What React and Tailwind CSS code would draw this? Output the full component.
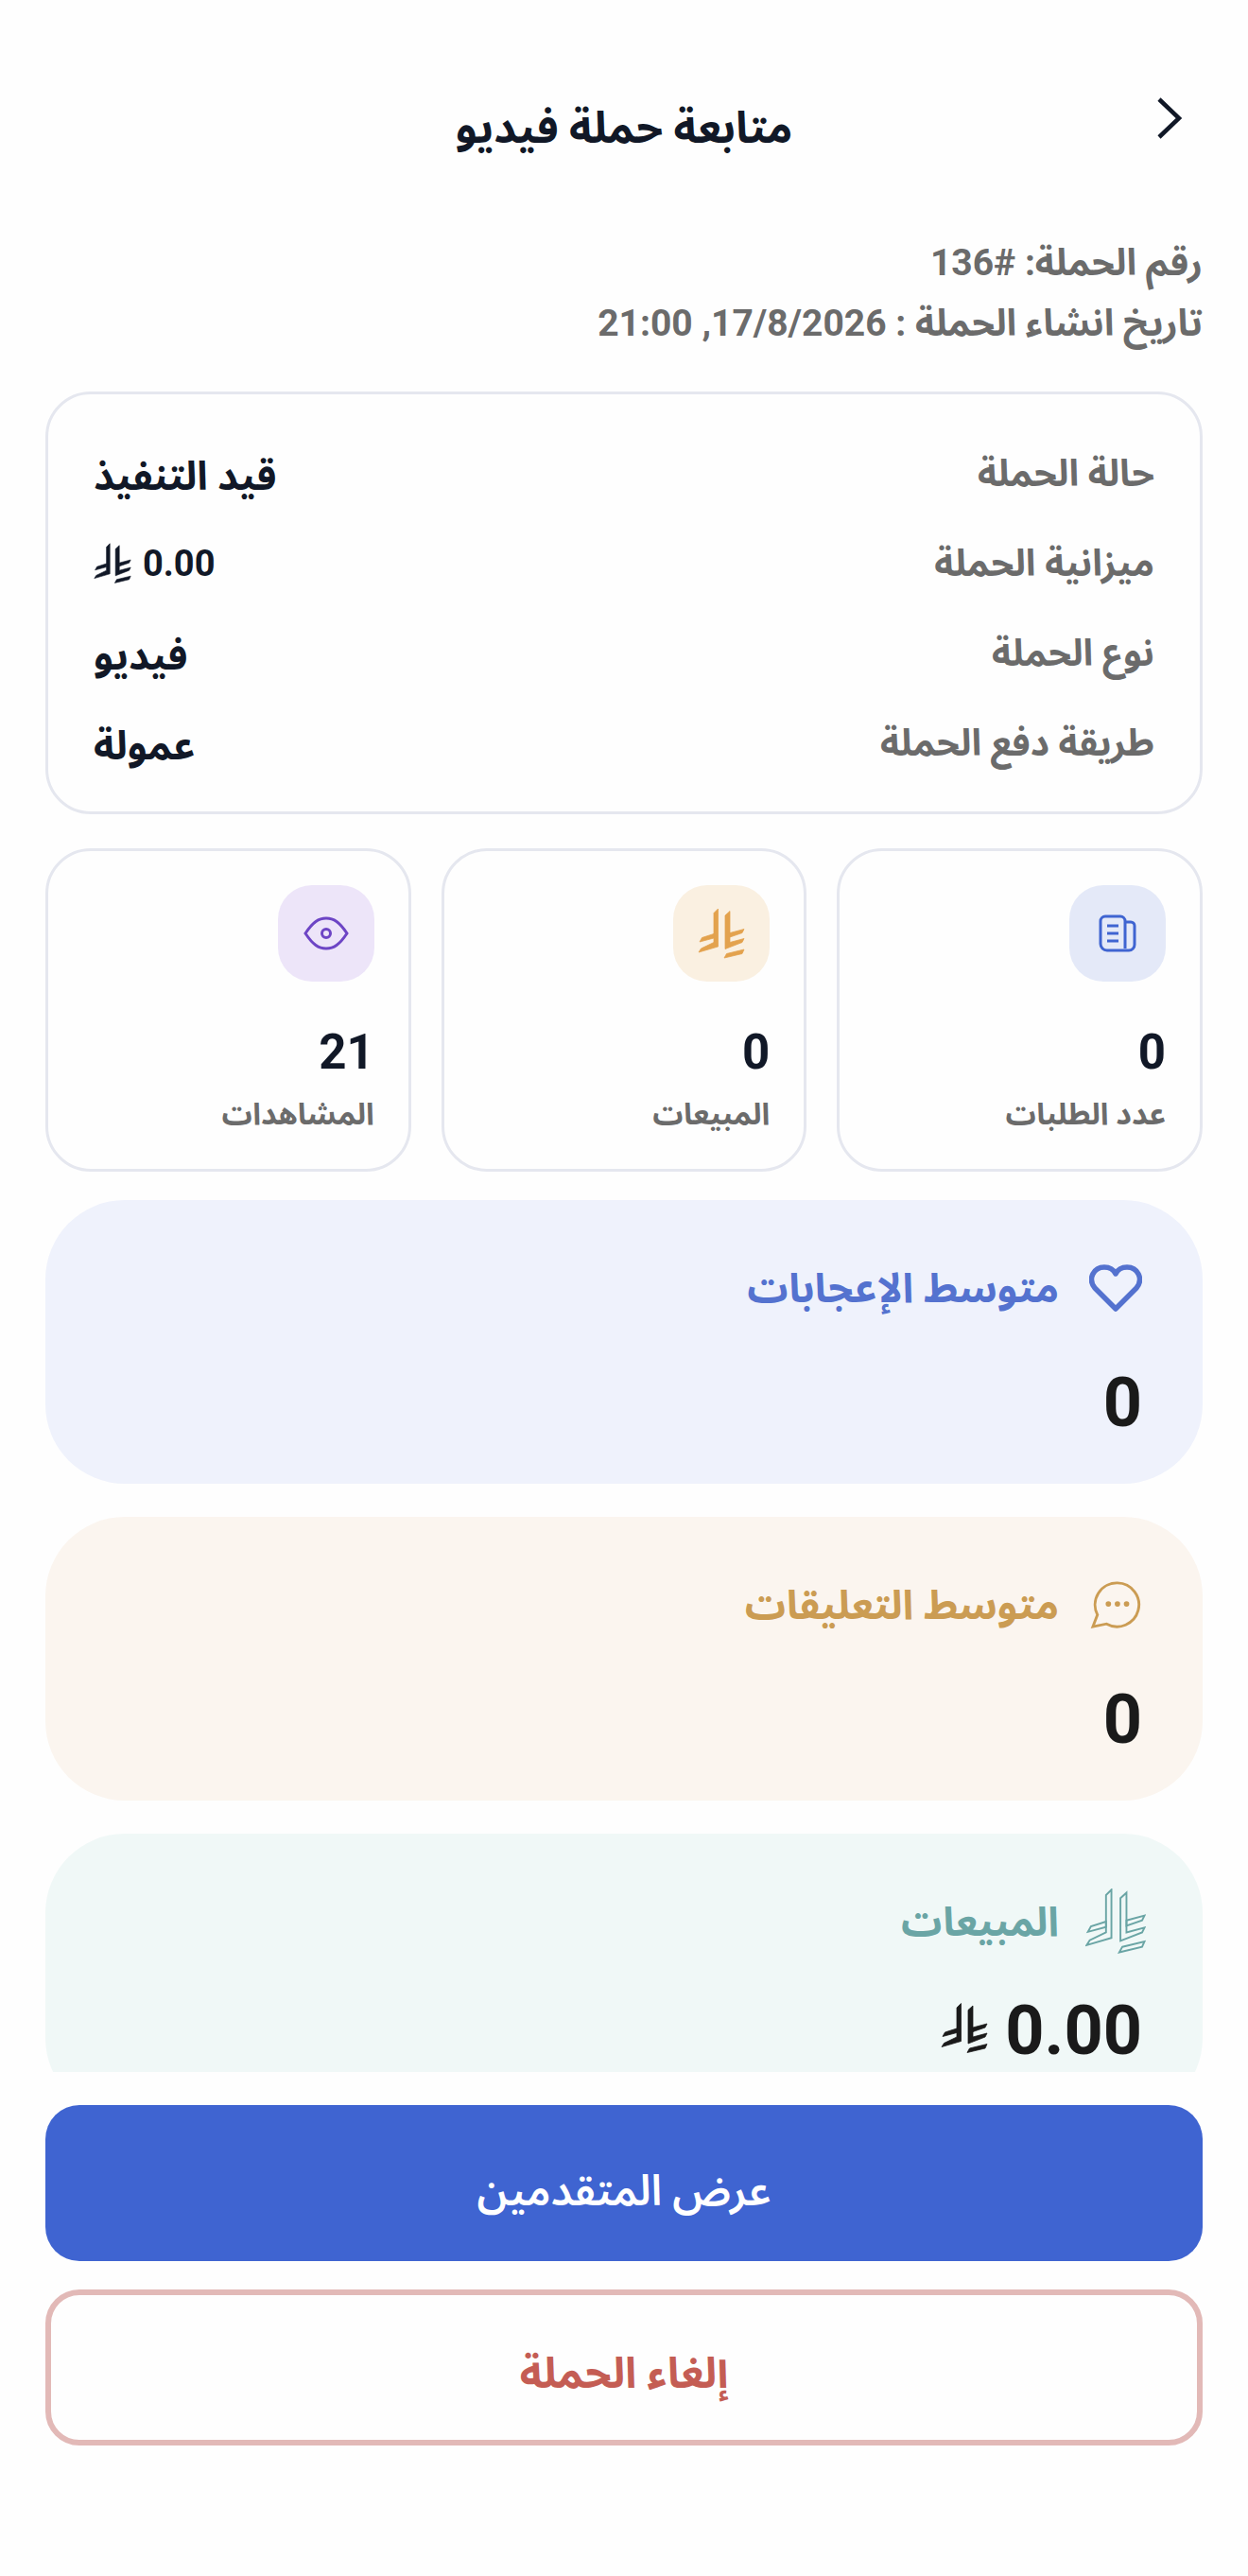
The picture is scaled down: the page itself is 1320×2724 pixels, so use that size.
const font = { fontFamily: 'Roboto, "Noto Sans Arabic", "DejaVu Sans", sans-serif' };

function Riyal({ className, outline }) {
  return (
    <svg
      viewBox="-2 -2 100 110"
      className={className}
      fill={outline ? "none" : "currentColor"}
      stroke="currentColor"
      strokeWidth={outline ? 3 : 1.5}
    >
      <path d="M32 9 L41 0 V80 L0 92 L5 84 L32 71 Z" />
      <path d="M32 53 L7 61 L2 70 L32 62 Z" />
      <path d="M56 14 L66 5 V71 L96 63 L92 71 L56 85 Z" />
      <path d="M66 51 L96 43 L92 51 L66 60 Z" />
      <path d="M59 95 L96 86 L92 95 L54 104 Z" />
    </svg>
  );
}

function StatCard({ bg, icon, value, label }) {
  return (
    <div className="flex h-[342px] flex-col rounded-[48px] border-[3px] border-[#e5e7ef] p-[36px]">
      <div className={`flex h-[102px] w-[102px] shrink-0 items-center justify-center rounded-[36px] ${bg}`}>{icon}</div>
      <p className="mt-[43px] text-[51px] leading-[64px] font-bold text-[#111827]">{value}</p>
      <p className="mt-[13px] text-[32px] leading-[40px] font-bold text-[#6b6b6b]">{label}</p>
    </div>
  );
}

function BigCard({ bg, color, icon, label, children }) {
  return (
    <div className={`h-[300px] shrink-0 rounded-[84px] px-[64px] pt-[57px] ${bg}`}>
      <div className={`flex h-[72px] items-center gap-[32px] ${color}`}>
        <div className="flex w-[56px] shrink-0 justify-center">{icon}</div>
        <span className="text-[43px] font-bold">{label}</span>
      </div>
      {children}
    </div>
  );
}

export default function App() {
  return (
    <div dir="rtl" style={font} className="flex h-[2724px] w-[1320px] flex-col bg-[#fefefe] px-[48px]">
      <header className="relative flex h-[163px] shrink-0 items-end justify-center">
        <h1 className="text-[46px] leading-[56px] font-bold text-[#111827]">متابعة حملة فيديو</h1>
        <svg viewBox="0 0 32 46" className="absolute top-[102px] right-[20px] h-[46px] w-[32px] text-[#111827]" fill="none" stroke="currentColor" strokeWidth="4.5">
          <path d="M6 3 L27 23 L6 43" />
        </svg>
      </header>
      <div className="mt-[93px] shrink-0 space-y-[20px] text-[39px] leading-[44px] font-bold text-[#6b6b6b]">
        <p>رقم الحملة: #136</p>
        <p>تاريخ انشاء الحملة : 17/8/2026, 21:00</p>
      </div>
      <div className="mt-[50px] flex min-h-0 flex-1 flex-col overflow-hidden">
        <div className="flex h-[447px] shrink-0 flex-col justify-center gap-[45px] rounded-[48px] border-[3px] border-[#e5e7ef] px-[48px] pt-[12px]">
          {[
            ["حالة الحملة", "قيد التنفيذ"],
            ["ميزانية الحملة", "0.00"],
            ["نوع الحملة", "فيديو"],
            ["طريقة دفع الحملة", "عمولة"],
          ].map(([k, v], i) => (
            <div key={k} className="flex h-[50px] items-center justify-between">
              <span className="text-[39px] font-bold text-[#6b6b6b]">{k}</span>
              {i === 1 ? (
                <span className="flex items-center gap-[12px] text-[38px] font-bold text-[#111827]">
                  {v}
                  <Riyal className="h-[44px] w-[40px]" />
                </span>
              ) : (
                <span className="pt-[5px] text-[42px] font-bold text-[#111827]">{v}</span>
              )}
            </div>
          ))}
        </div>
        <div className="mt-[36px] grid shrink-0 grid-cols-3 gap-[32px]">
          <StatCard
            bg="bg-[#e4e9f8]"
            value="0"
            label="عدد الطلبات"
            icon={
              <svg viewBox="0 0 40 40" className="h-[40px] w-[40px] text-[#3f64d1]" fill="none" stroke="currentColor" strokeWidth="3">
                <path d="M28 36 V7 a5 5 0 0 0 -5 -5 H7 a5 5 0 0 0 -5 5 V31 a7 7 0 0 0 7 7 H32 a6 6 0 0 0 6 -6 V12 a4 4 0 0 0 -4 -4 H28" />
                <path d="M9 12 H21 M9 20 H21 M9 28 H21" />
              </svg>
            }
          />
          <StatCard bg="bg-[#faf0e1]" value="0" label="المبيعات" icon={<Riyal className="h-[55px] w-[50px] text-[#e3a24d]" />} />
          <StatCard
            bg="bg-[#ede5f9]"
            value="21"
            label="المشاهدات"
            icon={
              <svg viewBox="0 0 48 36" className="h-[36px] w-[48px] text-[#6d45c5]" fill="none" stroke="currentColor" strokeWidth="3">
                <path d="M2 18 C10 6 16 2 24 2 S38 6 46 18 C38 30 32 34 24 34 S10 30 2 18 Z" />
                <circle cx="24" cy="18" r="4.5" />
              </svg>
            }
          />
        </div>
        <div className="mt-[30px] flex shrink-0 flex-col gap-[35px]">
          <BigCard
            bg="bg-[#eff2fc]"
            color="text-[#5472cf]"
            label="متوسط الإعجابات"
            icon={
              <svg viewBox="0 0 56 50" className="h-[50px] w-[56px]" fill="none" stroke="currentColor" strokeWidth="5.5" strokeLinejoin="round">
                <path d="M28 47 L6 25 C-2 15 5 3 16 3 C22 3 26 6 28 10 C30 6 34 3 40 3 C51 3 58 15 50 25 Z" />
              </svg>
            }
          >
            <p className="mt-[38px] text-[72px] leading-[96px] font-bold text-[#1a1a1a]">0</p>
          </BigCard>
          <BigCard
            bg="bg-[#fbf5ef]"
            color="text-[#cb9c53]"
            label="متوسط التعليقات"
            icon={
              <svg viewBox="0 0 56 52" className="h-[50px] w-[54px]" fill="none" stroke="currentColor" strokeWidth="3">
                <path d="M30 2 A24 24 0 1 1 18 47 L3 50 L8 37 A24 24 0 0 1 30 2 Z" />
                <circle cx="20" cy="25" r="1.5" fill="currentColor" />
                <circle cx="30" cy="25" r="1.5" fill="currentColor" />
                <circle cx="40" cy="25" r="1.5" fill="currentColor" />
              </svg>
            }
          >
            <p className="mt-[38px] text-[72px] leading-[96px] font-bold text-[#1a1a1a]">0</p>
          </BigCard>
          <BigCard bg="bg-[#f0f8f7]" color="text-[#6aa5a5]" label="المبيعات" icon={<Riyal outline className="h-[70px] w-[64px] shrink-0" />}>
            <p className="mt-[32px] flex items-center gap-[18px] text-[72px] leading-[96px] font-bold text-[#1a1a1a]">
              0.00
              <Riyal className="mb-[6px] h-[56px] w-[50px]" />
            </p>
          </BigCard>
        </div>
      </div>
      <div className="flex shrink-0 flex-col gap-[30px] pt-[35px] pb-[138px]">
        <button className="h-[165px] rounded-[36px] bg-[#3f64d1] pt-[16px] text-[45px] font-semibold text-white">عرض المتقدمين</button>
        <button className="h-[165px] rounded-[36px] border-[6px] border-[#e2b9b7] pt-[12px] text-[45px] font-bold text-[#c45d54]">إلغاء الحملة</button>
      </div>
    </div>
  );
}
